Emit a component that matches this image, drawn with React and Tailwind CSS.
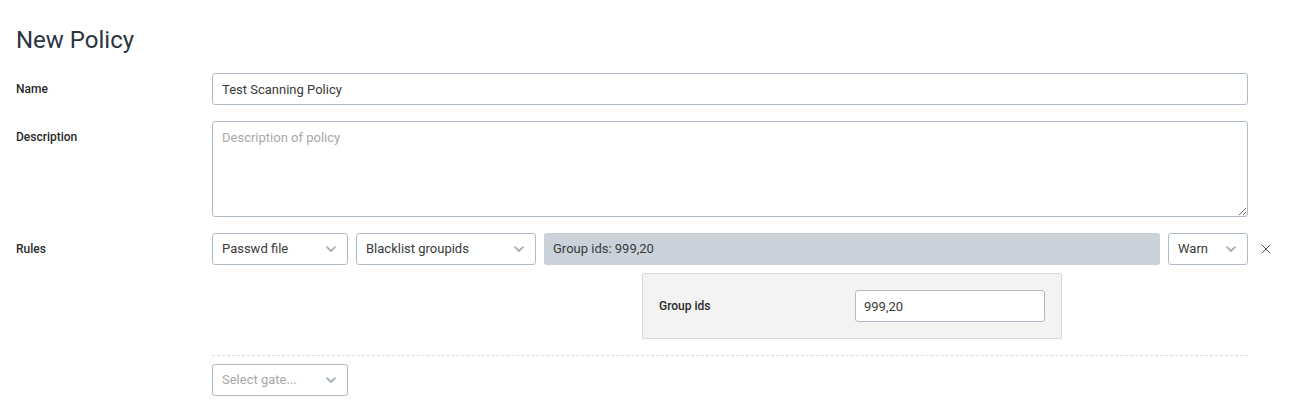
import { X } from "lucide-react";

const Chevron = () => (
  <svg width="14" height="14" viewBox="0 0 14 14" fill="none" className="shrink-0">
    <path d="M3 5.2 L7 9 L11 5.2" stroke="#a3afba" strokeWidth="1.8" strokeLinecap="round" strokeLinejoin="round" />
  </svg>
);

const Select = ({ value, placeholder, className = "" }) => (
  <div
    className={`h-8 flex items-center justify-between pl-[9px] pr-[9px] border border-[#aebbc6] rounded-[3px] bg-white text-[13px] ${className}`}
  >
    <span className={value ? "text-[#3a3a3a]" : "text-[#a8a8a8]"}>{value || placeholder}</span>
    <Chevron />
  </div>
);

const Label = ({ children }) => (
  <div className="w-[196px] shrink-0 h-8 flex items-center text-[12px] font-medium text-[#2a2a2a]">
    {children}
  </div>
);

export default function App() {
  return (
    <div className="min-h-screen bg-white pl-4 pr-11 pt-[24px] font-['Roboto',sans-serif] text-[#333]">
      <h1 className="text-[24px] leading-8 text-[#2b3440] mb-[17px]">New Policy</h1>

      <div className="flex flex-col gap-4">
        {/* Name */}
        <div className="flex">
          <Label>Name</Label>
          <input
            readOnly
            value="Test Scanning Policy"
            className="flex-1 h-8 px-[9px] border border-[#aebbc6] rounded-[3px] text-[13px] text-[#3a3a3a] outline-none"
          />
        </div>

        {/* Description */}
        <div className="flex">
          <Label>Description</Label>
          <textarea
            readOnly
            placeholder="Description of policy"
            className="flex-1 h-[96px] px-[9px] py-[7px] border border-[#aebbc6] rounded-[3px] text-[13px] leading-[17px] placeholder:text-[#a8a8a8] outline-none"
          />
        </div>

        {/* Rules */}
        <div className="flex">
          <Label>Rules</Label>
          <div className="flex-1 flex flex-col relative">
            <div className="flex items-center gap-2">
              <Select value="Passwd file" className="w-[136px]" />
              <Select value="Blacklist groupids" className="w-[180px]" />
              <div className="flex-1 h-8 flex items-center px-[9px] rounded-[3px] bg-[#c9d2da] text-[13px] text-[#3a3a3a]">
                Group ids: 999,20
              </div>
              <Select value="Warn" className="w-[80px]" />
            </div>
            <button className="absolute right-[-26px] top-0 h-8 w-4 flex items-center justify-center">
              <X size={16} strokeWidth={1.5} color="#555" />
            </button>
            <div className="mt-2 flex">
              <div className="ml-[430px] w-[420px] h-[66px] flex items-center pl-4 pr-4 bg-[#f3f3f3] border border-[#d9d9d9] rounded-[2px]">
                <span className="w-[196px] shrink-0 text-[12px] font-medium text-[#2a2a2a]">Group ids</span>
                <input
                  readOnly
                  value="999,20"
                  className="w-[190px] h-8 px-2 bg-white border border-[#aebbc6] rounded-[3px] text-[13px] text-[#3a3a3a] outline-none"
                />
              </div>
            </div>
            <div className="mt-4 border-t border-dashed border-[#dcdcdc]" />
            <div className="mt-2">
              <Select placeholder="Select gate..." className="w-[136px]" />
            </div>
          </div>
        </div>
      </div>
    </div>
  );
}
